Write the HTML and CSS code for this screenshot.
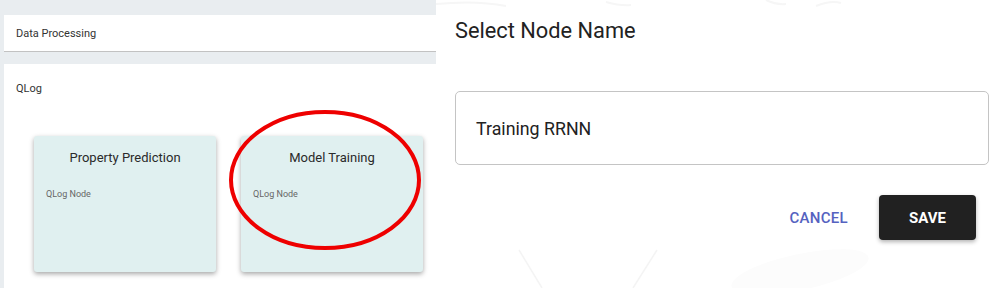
FILE: index.html
```html
<!DOCTYPE HTML>
<html>
<head>
<meta charset="utf-8">
<link rel="stylesheet" href="styles.css">
</head>
<body>
  <div id="page">
    <div class="left">
      <div class="group group-top">
        <p class="group-name">Data Processing</p>
      </div>
      <div class="group group-main">
        <p class="group-name">QLog</p>
        <div class="nodes">
          <div class="node">
            <h3>Property Prediction</h3>
            <p>QLog Node</p>
          </div>
          <div class="node">
            <h3>Model Training</h3>
            <p>QLog Node</p>
          </div>
        </div>
      </div>
      <svg class="mark" width="200" height="146" viewBox="0 0 200 146">
        <ellipse cx="97" cy="70" rx="94" ry="68" fill="none" stroke="#ee0000" stroke-width="4"/>
      </svg>
    </div>
    <div class="dialog">
      <svg class="deco" width="562" height="288" viewBox="0 0 562 288">
        <path d="M0 4 Q40 0 70 6 M170 2 Q185 6 195 5 M330 0 Q340 5 350 4 M380 6 Q395 0 405 3" stroke="#f6f6f6" stroke-width="2" fill="none"/>
        <path d="M83 250 L106 288 M221 250 L197 288" stroke="#f4f4f4" stroke-width="1.5" fill="none"/>
        <ellipse cx="800" cy="272" rx="70" ry="18" fill="#fcfcfc" transform="translate(-436 0) rotate(-12 800 272)"/>
      </svg>
      <h2>Select Node Name</h2>
      <div class="field">Training RRNN</div>
      <div class="actions">
        <span class="cancel">CANCEL</span>
        <span class="save">SAVE</span>
      </div>
    </div>
  </div>
</body>
</html>
```
FILE: styles.css
```css
*{
    padding: 0px;
    margin: 0px;
    box-sizing: border-box;
}
body{
    font-family: Roboto, "Liberation Sans", sans-serif;
    width: 998px;
    height: 288px;
    overflow: hidden;
    background: #fff;
}
#page{
    display: flex;
    height: 288px;
}
.left{
    width: 436px;
    flex: none;
    background: #e9edf0;
    padding: 15px 0 0 4px;
    position: relative;
}
.group{
    background: #fff;
}
.group-top{
    height: 37px;
    border-bottom: 1px solid #c2c2c2;
    display: flex;
    align-items: center;
}
.group-main{
    margin-top: 12px;
    height: 230px;
    padding-top: 18px;
}
.group-name{
    font-size: 11px;
    color: #333;
    padding-left: 12px;
}
.group-top .group-name{
    margin-top: 1px;
}
.nodes{
    display: flex;
    gap: 25px;
    padding: 41px 0 0 30px;
}
.node{
    width: 182px;
    height: 136px;
    background: #e0f0f0;
    border-radius: 3px;
    box-shadow: 0 2px 5px rgba(0,0,0,0.35);
    padding: 14px 12px 0 12px;
}
.node h3{
    font-size: 13px;
    font-weight: 400;
    color: #2a2a2a;
    text-align: center;
}
.node p{
    font-size: 9px;
    color: #666;
    margin-top: 24px;
}
.mark{
    position: absolute;
    left: 228px;
    top: 110px;
}
.dialog{
    flex: 1;
    position: relative;
    padding: 15px 9px 0 19px;
}
.deco{
    position: absolute;
    left: 0;
    top: 0;
}
.dialog h2{
    position: relative;
    font-size: 21.8px;
    font-weight: 400;
    color: #222;
    line-height: 32px;
}
.field{
    position: relative;
    margin-top: 44px;
    height: 74px;
    border: 1px solid #c4c4c4;
    border-radius: 5px;
    padding-left: 20px;
    display: flex;
    align-items: center;
    font-size: 17.8px;
    color: #222;
}
.actions{
    position: relative;
    display: flex;
    justify-content: flex-end;
    align-items: center;
    gap: 31px;
    margin-top: 30px;
    padding-right: 13px;
}
.cancel{
    font-size: 15px;
    font-weight: 500;
    color: #5562c0;
    letter-spacing: 0.3px;
}
.save{
    width: 97px;
    height: 45px;
    background: #212121;
    color: #fff;
    border-radius: 4px;
    box-shadow: 0 2px 4px rgba(0,0,0,0.3);
    display: flex;
    align-items: center;
    justify-content: center;
    font-size: 15px;
    font-weight: 700;
}
```
